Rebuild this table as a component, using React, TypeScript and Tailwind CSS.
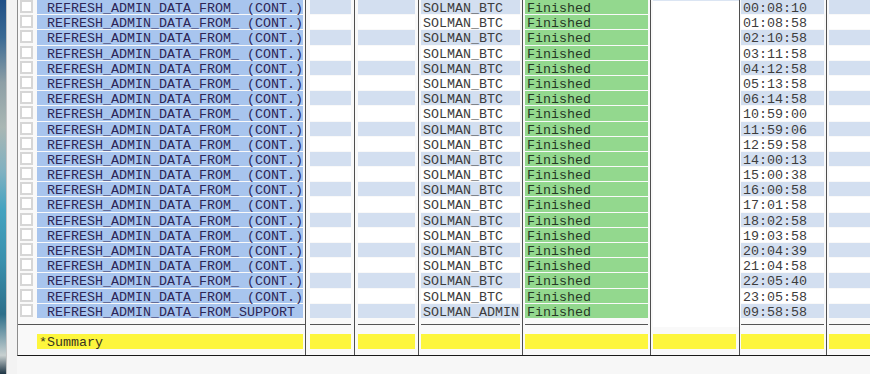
import React from 'react'

const times = [
  '00:08:10', '01:08:58', '02:10:58', '03:11:58', '04:12:58', '05:13:58', '06:14:58',
  '10:59:00', '11:59:06', '12:59:58', '14:00:13', '15:00:38', '16:00:58', '17:01:58',
  '18:02:58', '19:03:58', '20:04:39', '21:04:58', '22:05:40', '23:05:58', '09:58:58',
]

const rows = times.map((time, i) => ({
  time,
  name: i === times.length - 1 ? 'REFRESH_ADMIN_DATA_FROM_SUPPORT' : 'REFRESH_ADMIN_DATA_FROM_ (CONT.)',
  user: i === times.length - 1 ? 'SOLMAN_ADMIN' : 'SOLMAN_BTC',
  status: 'Finished',
  alt: i % 2 === 0,
}))

// one column of the ALV grid: rows on top, then the line, then the summary
function Column({ className, children, summary }: { className: string; children: React.ReactNode; summary: React.ReactNode }) {
  return (
    <div className={`flex flex-col shrink-0 ${className}`}>
      <div className="h-[324px] overflow-hidden">
        <div className="flex flex-col">{children}</div>
      </div>
      <div className="h-px bg-[#555]" />
      <div className="h-[30px] pt-[9px]">{summary}</div>
    </div>
  )
}

const Sep = () => <div className="w-px shrink-0 bg-[#4f4f4f]" />

function Row({ children }: { children: React.ReactNode }) {
  return <div className="h-[15.2px] pb-px flex">{children}</div>
}

function Cell({ alt, text, className = '' }: { alt: boolean; text?: string; className?: string }) {
  return (
    <div className={`flex-1 h-full pl-[2px] leading-[18px] whitespace-pre text-[#3c3c3c] ${alt ? 'bg-[#d3dff0]' : 'bg-white'} ${className}`}>
      {text}
    </div>
  )
}

const Summary = ({ text }: { text?: string }) => (
  <div className="h-[15px] bg-[#fdf63d] pl-[2px] leading-[17px] whitespace-pre text-[#3a3520]">{text}</div>
)

export default function App() {
  return (
    <div className="w-[870px] h-[374px] overflow-hidden bg-[#f7f7f7] flex font-['Liberation_Mono',monospace] text-[13.33px]">
      <div className="w-[6px] h-full shrink-0 bg-[linear-gradient(180deg,#1f4f86_0%,#3b6a94_10%,#8d9fa6_22%,#a9b7b4_34%,#7fb1c1_46%,#44a3c0_56%,#3a90ad_70%,#2d6f8a_84%,#c8d0d0_95%,#1d3444_100%)]" />
      <div className="w-[11px] h-full shrink-0 border-l border-[#c4c4c4] bg-[#f3f3f3]" />

      <div className="h-[356px] flex border-l border-[#8c8c8c] border-b border-b-[#1a1a1a] bg-[#f9f9f9]">
        <Column className="w-[287px]" summary={<div className="pl-[19px] pr-[2px]"><Summary text="*Summary" /></div>}>
          {rows.map((r, i) => (
            <Row key={i}>
              <div className="w-[19px] pl-[2px] shrink-0">
                <div className="w-[13px] h-[13px] border-2 border-[#d6d6d6] bg-white" />
              </div>
              <div className="flex-1 pr-[2px]">
                <div className="h-full bg-[#a8c5ee] pl-[10px] leading-[18px] whitespace-pre text-[#2c2656]">{r.name}</div>
              </div>
            </Row>
          ))}
        </Column>
        <Sep />

        <Column className="w-[48px] pl-[4px] pr-[3px]" summary={<Summary />}>
          {rows.map((r, i) => <Row key={i}><Cell alt={r.alt} /></Row>)}
        </Column>
        <Sep />

        <Column className="w-[63px] pl-[3px] pr-[3px]" summary={<Summary />}>
          {rows.map((r, i) => <Row key={i}><Cell alt={r.alt} /></Row>)}
        </Column>
        <Sep />

        <Column className="w-[103px] pl-[2px] pr-[2px]" summary={<Summary />}>
          {rows.map((r, i) => <Row key={i}><Cell alt={r.alt} text={r.user} /></Row>)}
        </Column>
        <Sep />

        <Column className="w-[127px] pl-[2px] pr-[2px]" summary={<Summary />}>
          {rows.map((r, i) => <Row key={i}><Cell alt={false} text={r.status} className="!bg-[#93d88e] !text-[#263826]" /></Row>)}
        </Column>
        <Sep />

        <div className="w-[88px] shrink-0 flex flex-col">
          <div className="h-[327px] ml-[2px] bg-white border-t border-[#dbe5f3]" />
          <div className="pt-[7px] pr-[3px] pl-[2px]"><Summary /></div>
        </div>
        <Sep />

        <Column className="w-[86px] pl-[1px] pr-[2px]" summary={<Summary />}>
          {rows.map((r, i) => <Row key={i}><Cell alt={r.alt} text={r.time} /></Row>)}
        </Column>
        <Sep />

        <Column className="w-[60px] pl-[2px]" summary={<Summary />}>
          {rows.map((r, i) => <Row key={i}><Cell alt={r.alt} /></Row>)}
        </Column>
      </div>
    </div>
  )
}
